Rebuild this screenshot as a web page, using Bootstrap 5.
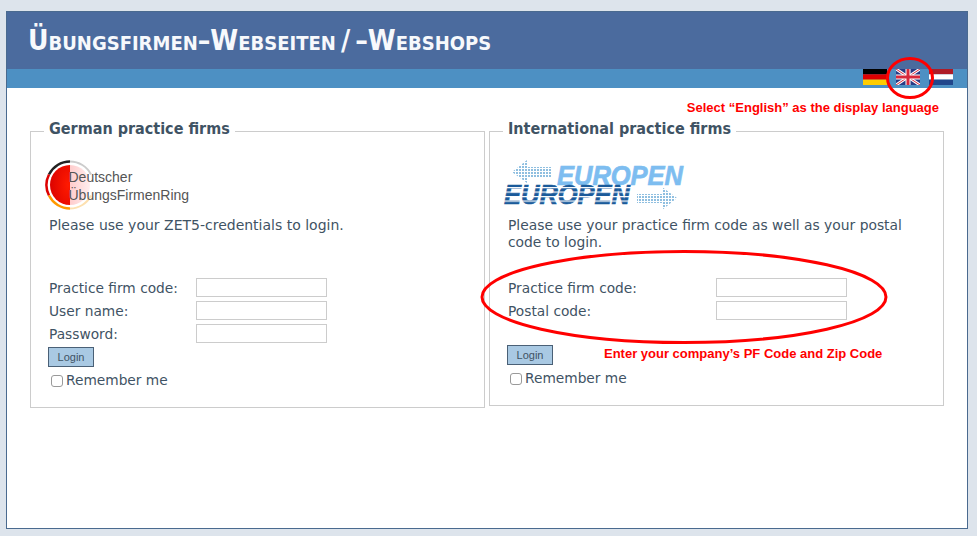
<!DOCTYPE html>
<html lang="de">
<head>
  <meta charset="UTF-8">
  <title>Übungsfirmen-Webseiten / -Webshops</title>
  <link href="https://cdn.jsdelivr.net/npm/bootstrap@5.3.0/dist/css/bootstrap.min.css" rel="stylesheet">
  <style>
    body {
      background-color: #dde4ec;
      font-family: "DejaVu Sans", sans-serif;
      font-size: 14px;
      color: #3f5364;
      height: 536px;
      overflow: hidden;
    }
    .frame {
      position: relative;
      margin: 11px 9px 0 6px;
      height: 518px;
      background: #fff;
      border: 1px solid #4a6a8f;
    }
    .head-bar {
      height: 57px;
      background: #4b6b9e;
      color: #f7f9fc;
      padding: 11px 0 0 21px;
      font-family: "DejaVu Sans Condensed", "DejaVu Sans", sans-serif;
      font-weight: 700;
      font-variant: small-caps;
      font-size: 28.1px;
      line-height: 36px;
      white-space: nowrap;
    }
    .flag-bar {
      height: 19px;
      background: #4d90c3;
      padding-right: 14px;
      gap: 9px;
    }
    .flag-bar svg { display: block; width: 24px; height: 16px; }
    .hint-top {
      height: 31px;
      padding: 9px 28px 0 0;
      text-align: right;
    }
    .hint {
      font-family: "Liberation Sans", sans-serif;
      font-weight: 700;
      font-size: 13px;
      line-height: 16px;
      color: #f00;
      white-space: nowrap;
    }
    .firms {
      padding-left: 23px;
      gap: 4px;
      align-items: flex-start;
    }
    .firm-box {
      width: 455px;
      border: 1px solid #ccc;
      padding: 0 18px 0;
      margin: 0;
      min-width: 0;
    }
    .firm-de { height: 289px; }
    .firm-int { height: 287px; }
    .firm-box legend {
      float: none;
      width: auto;
      font-family: "DejaVu Sans Condensed", "DejaVu Sans", sans-serif;
      font-size: 16px;
      font-weight: 700;
      line-height: 20px;
      margin: 0 0 0 -5px;
      padding: 0 5px 4px;
    }
    .logo-row { height: 50px; margin-top: 17px; }
    .logo-row svg { display: block; margin-left: -4px; overflow: visible; }
    .intro {
      height: 59px;
      margin: 7px 0 0;
      font-size: 13.85px;
      line-height: 17px;
    }
    .firm-de .intro { font-size: 14px; }
    .field-row {
      height: 23px;
      align-items: center;
      font-size: 13.75px;
    }
    .field-row label { width: 147px; padding-top: 2px; }
    .field-row label.wide-lab { width: 208px; }
    .field-input {
      width: 131px;
      height: 19px;
      border: 1px solid #ccc;
      padding: 0 3px;
      font-size: 12px;
    }
    .login-btn {
      width: 46px;
      height: 20px;
      padding: 0;
      margin: 2px 0 0 -1px;
      background: #a9c9e3;
      border: 1px solid #4a6076;
      border-radius: 0;
      color: #3f5364;
      font-family: "Liberation Sans", sans-serif;
      font-size: 11px;
      line-height: 18px;
    }
    .login-btn:hover { background: #a9c9e3; color: #3f5364; border-color: #4a6076; }
    .login-line {
      margin-top: 21px;
      gap: 51px;
    }
    .remember {
      margin: 3px 0 0 2px;
      height: 20px;
      gap: 3px;
      font-size: 13.75px;
    }
    .remember input {
      appearance: none;
      width: 12px;
      height: 12px;
      margin: 2px 0 0;
      background: #fff;
      border: 1px solid #9a9a9a;
      border-radius: 3px;
    }
    .logo-word {
      font-family: "Liberation Sans", sans-serif;
      font-size: 14px;
      fill: #555;
    }
    .euro-word {
      font-family: "Liberation Sans", sans-serif;
      font-size: 28px;
      font-weight: 700;
      font-style: italic;
      stroke-width: 0.7px;
    }
    .ring-mark {
      position: absolute;
      pointer-events: none;
      overflow: visible;
    }
    .ring-flag { left: 879px; top: 45px; }
    .ring-fields { left: 473px; top: 238px; }
  </style>
</head>
<body>
  <div class="frame">
    <div class="head-bar">Übungsfirmen–Webseiten&#8201;/&#8201;–Webshops</div>
    <div class="flag-bar d-flex justify-content-end align-items-start">
      <svg viewBox="0 0 24 16"><rect width="24" height="5.4" fill="#000"/><rect y="5.3" width="24" height="5.4" fill="#d00"/><rect y="10.6" width="24" height="5.4" fill="#fc0"/></svg>
      <svg viewBox="0 0 24 16"><rect width="24" height="16" fill="#2a3a85"/><path d="M0 0L24 16M24 0L0 16" stroke="#fff" stroke-width="3"/><path d="M0 0L24 16M24 0L0 16" stroke="#d8283c" stroke-width="1"/><path d="M12 0V16M0 8H24" stroke="#fff" stroke-width="5"/><path d="M12 0V16M0 8H24" stroke="#d8283c" stroke-width="3"/></svg>
      <svg viewBox="0 0 24 16"><rect width="24" height="5.4" fill="#ae1c28"/><rect y="5.3" width="24" height="5.4" fill="#fff"/><rect y="10.6" width="24" height="5.4" fill="#21468b"/></svg>
    </div>
    <div class="hint-top"><span class="hint">Select “English” as the display language</span></div>
    <div class="firms d-flex">
      <fieldset class="firm-box firm-de">
        <legend>German practice firms</legend>
        <div class="logo-row">
          <svg width="146" height="50" viewBox="0 0 146 50">
            <defs>
              <linearGradient id="pinkHalf" x1="0" x2="1"><stop offset="0" stop-color="#fcc"/><stop offset="1" stop-color="#fee"/></linearGradient>
              <radialGradient id="redHalf" cx="0.9" cy="0.5" r="1"><stop offset="0" stop-color="#ff1a00"/><stop offset="1" stop-color="#d80000"/></radialGradient>
            </defs>
            <path d="M25 5A20 20 0 0 1 25 45Z" fill="url(#pinkHalf)"/>
            <path d="M25 5A20 20 0 0 0 25 45Z" fill="url(#redHalf)"/>
            <path d="M25 1.5A23.5 23.5 0 0 0 4 14.5" fill="none" stroke="#222" stroke-width="2.5"/>
            <path d="M4 14.5A23.5 23.5 0 0 0 4 35.5" fill="none" stroke="#d00" stroke-width="2.5"/>
            <path d="M4 35.5A23.5 23.5 0 0 0 25 48.5" fill="none" stroke="#f90" stroke-width="2.5"/>
            <path d="M25 1.5A23.5 23.5 0 0 1 46 14.5" fill="none" stroke="#ccc" stroke-width="2"/>
            <path d="M25 48.5A23.5 23.5 0 0 0 46 35.5" fill="none" stroke="#fde0b0" stroke-width="2"/>
            <text class="logo-word" x="23.5" y="22">Deutscher</text>
            <text class="logo-word" x="23.5" y="40">ÜbungsFirmenRing</text>
          </svg>
        </div>
        <p class="intro">Please use your ZET5-credentials to login.</p>
        <div class="field-row d-flex"><label for="gfCode">Practice firm code:</label><input class="field-input" id="gfCode" type="text"></div>
        <div class="field-row d-flex"><label for="gfUser">User name:</label><input class="field-input" id="gfUser" type="text"></div>
        <div class="field-row d-flex"><label for="gfPass">Password:</label><input class="field-input" id="gfPass" type="password"></div>
        <button class="btn login-btn d-block" type="button">Login</button>
        <div class="remember d-flex align-items-center"><input type="checkbox" id="gfKeep"><label for="gfKeep">Remember me</label></div>
      </fieldset>
      <fieldset class="firm-box firm-int">
        <legend>International practice firms</legend>
        <div class="logo-row">
          <svg width="181" height="50" viewBox="0 0 181 50">
            <defs>
              <pattern id="dotFill" width="3" height="3" patternUnits="userSpaceOnUse"><rect width="2" height="2" fill="#8fbfe0"/></pattern>
              <pattern id="stripes" width="6" height="4.5" patternUnits="userSpaceOnUse"><rect width="6" height="1.2" fill="#fff"/></pattern>
            </defs>
            <path d="M8 12L23 0V7H48V17H23V23Z" fill="url(#dotFill)"/>
            <path d="M133 34H158V27L173 38L158 50V43H133Z" fill="url(#dotFill)"/>
            <text class="euro-word" x="53" y="25" fill="#7dbdf0" stroke="#7dbdf0" textLength="126" lengthAdjust="spacingAndGlyphs">EUROPEN</text>
            <text class="euro-word" x="0" y="44" fill="#1a5a9a" stroke="#1a5a9a" textLength="126" lengthAdjust="spacingAndGlyphs">EUROPEN</text>
            <rect x="0" y="26" width="128" height="18" fill="url(#stripes)"/>
          </svg>
        </div>
        <p class="intro">Please use your practice firm code as well as your postal code to login.</p>
        <div class="field-row d-flex"><label class="wide-lab" for="ifCode">Practice firm code:</label><input class="field-input" id="ifCode" type="text"></div>
        <div class="field-row d-flex"><label class="wide-lab" for="ifZip">Postal code:</label><input class="field-input" id="ifZip" type="text"></div>
        <div class="login-line d-flex align-items-center">
          <button class="btn login-btn" type="button">Login</button>
          <span class="hint">Enter your company’s PF Code and Zip Code</span>
        </div>
        <div class="remember d-flex align-items-center"><input type="checkbox" id="ifKeep"><label for="ifKeep">Remember me</label></div>
      </fieldset>
    </div>
    <svg class="ring-mark ring-flag" width="48" height="42" viewBox="0 0 48 42"><ellipse cx="24" cy="21" rx="22.5" ry="19.5" fill="none" stroke="#f00" stroke-width="3"/></svg>
    <svg class="ring-mark ring-fields" width="408" height="94" viewBox="0 0 408 94"><ellipse cx="204" cy="47" rx="202" ry="45.5" fill="none" stroke="#f00" stroke-width="3"/></svg>
  </div>
  <script src="https://cdn.jsdelivr.net/npm/bootstrap@5.3.0/dist/js/bootstrap.bundle.min.js"></script>
</body>
</html>
